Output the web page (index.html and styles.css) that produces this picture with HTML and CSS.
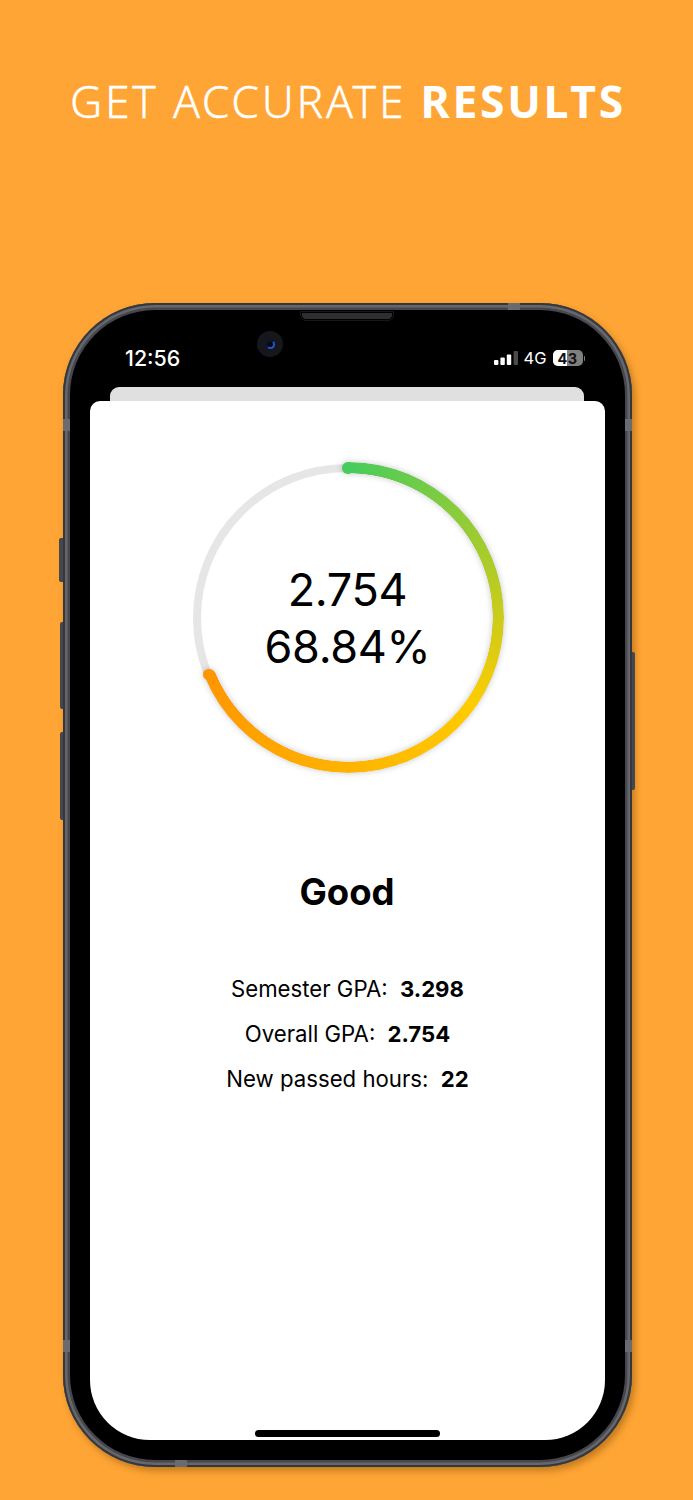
FILE: index.html
```html
<!DOCTYPE html>
<html lang="en">
<head>
    <meta charset="UTF-8">
    <meta name="viewport" content="width=device-width, initial-scale=1.0">
    <title>Get Accurate Results</title>
    <link rel="stylesheet" href="styles.css">
</head>
<body>
    <h1 class="headline">GET ACCURATE <strong>RESULTS</strong></h1>

    <div class="phone">
        <span class="side-btn mute"></span>
        <span class="side-btn vol-up"></span>
        <span class="side-btn vol-down"></span>
        <span class="side-btn power"></span>
        <span class="band band-top"></span>
        <span class="band band-bottom"></span>
        <span class="band band-left"></span>
        <span class="band band-right"></span>
        <span class="band band-left-low"></span>
        <span class="band band-right-low"></span>

        <div class="bezel">
            <span class="speaker"></span>
            <span class="camera"><span class="lens"></span></span>

            <div class="status-bar">
                <span class="time">12:56</span>
                <div class="status-icons">
                    <svg class="signal" width="24" height="14" viewBox="0 0 24 14">
                        <rect x="0" y="9" width="4.4" height="5" rx="1" fill="#fff"/>
                        <rect x="6.4" y="6.5" width="4.4" height="7.5" rx="1" fill="#fff"/>
                        <rect x="12.8" y="3.5" width="4.4" height="10.5" rx="1" fill="#fff"/>
                        <rect x="19.6" y="0" width="4.4" height="14" rx="1" fill="#4a4a4a"/>
                    </svg>
                    <span class="network">4G</span>
                    <span class="battery"><span class="battery-fill"></span><span class="battery-level">43</span></span>
                    <span class="battery-tip"></span>
                </div>
            </div>

            <div class="sheet-back"></div>
            <div class="sheet">
                <div class="gauge">
                    <div class="gauge-track"></div>
                    <div class="gauge-arc">
                        <div class="gauge-fill"></div>
                        <span class="cap cap-start"></span>
                        <span class="cap cap-end"></span>
                    </div>
                    <div class="gauge-text">
                        <div>2.754</div>
                        <div>68.84%</div>
                    </div>
                </div>

                <h2 class="grade">Good</h2>

                <div class="stats">
                    <p>Semester GPA: <b>3.298</b></p>
                    <p>Overall GPA: <b>2.754</b></p>
                    <p>New passed hours: <b>22</b></p>
                </div>

                <span class="home-bar"></span>
            </div>
        </div>
    </div>
</body>
</html>
```

FILE: styles.css
```css
html, body {
    margin: 0;
    height: 1500px;
    overflow: hidden;
}
body {
    background-color: #ffa535;
    font-family: 'Inter', 'Liberation Sans', sans-serif;
    color: #000;
}
.headline {
    margin: 0;
    padding: 71px 0 0 3px;
    height: 303px;
    box-sizing: border-box;
    text-align: center;
    color: #fff;
    font-family: 'Noto Sans', sans-serif;
    font-weight: 300;
    -webkit-text-stroke: 0.35px #fff;
    font-size: 44.5px;
    line-height: 60px;
    letter-spacing: 2.7px;
    white-space: nowrap;
}
.headline strong {
    font-weight: 700;
    -webkit-text-stroke: 0;
}

/* phone body */
.phone {
    position: relative;
    box-sizing: border-box;
    width: 569px;
    height: 1164px;
    margin-left: 63px;
    padding: 7px;
    border-radius: 92px;
    background: #46474c;
    box-shadow: 3px 4px 7px rgba(120, 70, 0, 0.45), inset 0 0 0 2px #36373c, inset 0 0 0 4.5px #66676c;
}
.band {
    position: absolute;
    background: #6a6b70;
}
.band-top { top: 0; right: 112px; width: 12px; height: 7px; }
.band-bottom { bottom: 0; left: 112px; width: 12px; height: 7px; }
.band-left { left: 0; top: 116px; width: 7px; height: 12px; }
.band-right { right: 0; top: 116px; width: 7px; height: 12px; }
.band-left-low { left: 0; bottom: 115px; width: 7px; height: 12px; }
.band-right-low { right: 0; bottom: 115px; width: 7px; height: 12px; }

.side-btn {
    position: absolute;
    background: #46474d;
    border-radius: 2px 0 0 2px;
}
.mute { left: -4px; top: 235px; width: 4px; height: 44px; }
.vol-up { left: -3px; top: 319px; width: 3px; height: 87px; }
.vol-down { left: -3px; top: 429px; width: 3px; height: 88px; }
.power { right: -3px; top: 349px; width: 3px; height: 138px; border-radius: 0 2px 2px 0; }

.bezel {
    position: relative;
    height: 100%;
    background: #000;
    border-radius: 85px;
    overflow: hidden;
}
.speaker {
    position: absolute;
    top: 2px;
    left: 231px;
    width: 92px;
    height: 8px;
    box-sizing: border-box;
    background: #2e2e31;
    border: 1px solid #000;
    outline: 1px solid #17171a;
    border-radius: 0 0 5px 5px;
}
.camera {
    position: absolute;
    top: 21px;
    left: 187px;
    width: 26px;
    height: 26px;
    border-radius: 50%;
    background: #15171d;
    display: flex;
    align-items: center;
    justify-content: center;
}
.lens {
    width: 9px;
    height: 9px;
    box-sizing: border-box;
    border-radius: 50%;
    background: #05070f;
    border: 2px solid #2452c8;
    border-top-color: #0a1330;
    border-left-color: #0a1330;
}

/* status bar */
.status-bar {
    display: flex;
    justify-content: space-between;
    align-items: center;
    height: 24px;
    padding: 36px 40px 0 55px;
    color: #fff;
}
.time {
    font-size: 21.4px;
    font-weight: 500;
}
.status-icons {
    display: flex;
    align-items: center;
}
.network {
    margin-left: 6px;
    font-size: 16.5px;
}
.battery {
    position: relative;
    width: 30px;
    height: 16px;
    margin-left: 6px;
    border-radius: 5px;
    background: #7f7f7f;
    overflow: hidden;
    display: flex;
    align-items: center;
    justify-content: center;
}
.battery-fill {
    position: absolute;
    top: 0;
    left: 0;
    bottom: 0;
    width: 14px;
    background: #fff;
}
.battery-level {
    position: relative;
    color: #111;
    font-size: 14.5px;
    font-weight: 700;
    letter-spacing: 0.5px;
}
.battery-tip {
    width: 1.5px;
    height: 5px;
    margin-left: 1px;
    background: #7f7f7f;
    border-radius: 0 1px 1px 0;
}

/* sheets */
.sheet-back {
    height: 14px;
    margin: 17px 41px 0 40px;
    background: #e0e0e0;
    border-radius: 9px 9px 0 0;
}
.sheet {
    position: relative;
    height: 1039px;
    margin: 0 20px;
    padding-top: 61px;
    box-sizing: border-box;
    background: #fff;
    border-radius: 10px 10px 60px 60px;
}

/* gauge */
.gauge {
    position: relative;
    width: 311px;
    height: 312px;
    margin: 0 auto;
    left: 0.5px;
}
.gauge-track {
    position: absolute;
    top: 1.5px;
    left: 0.5px;
    width: 308px;
    height: 308px;
    box-sizing: border-box;
    border: 8px solid #e6e6e6;
    border-radius: 50%;
}
.gauge-arc {
    position: absolute;
    top: 0;
    left: 0;
    width: 311px;
    height: 311px;
    filter: drop-shadow(0 0 3px rgba(0, 0, 0, 0.22));
}
.gauge-fill {
    position: absolute;
    inset: 0;
    border-radius: 50%;
    background: conic-gradient(#46cc5c 0deg, #ffcc00 125deg, #ff9500 247.8deg, transparent 247.8deg);
    -webkit-mask: radial-gradient(circle at center, transparent 144px, #000 144.5px);
    mask: radial-gradient(circle at center, transparent 144px, #000 144.5px);
}
.cap {
    position: absolute;
    width: 11.5px;
    height: 11.5px;
    border-radius: 50%;
}
.cap-start {
    left: 149.7px;
    top: 0;
    background: #46cc5c;
}
.cap-end {
    left: 10.5px;
    top: 206.5px;
    background: #ff9500;
}
.gauge-text {
    position: absolute;
    inset: 0 1px 1px 0;
    display: flex;
    flex-direction: column;
    align-items: center;
    justify-content: center;
    font-size: 45px;
    line-height: 57px;
    letter-spacing: -0.3px;
}

.grade {
    margin: 96px 1px 0 0;
    text-align: center;
    font-size: 36.5px;
    line-height: 44px;
    font-weight: 700;
}

.stats {
    margin-top: 53px;
    text-align: center;
    font-size: 22.2px;
}
.stats p {
    margin: 0;
    height: 44.8px;
    line-height: 44.8px;
}
.stats b {
    font-weight: 700;
    margin-left: 6px;
}

.home-bar {
    position: absolute;
    left: 165px;
    bottom: 3px;
    width: 185px;
    height: 7px;
    border-radius: 3.5px;
    background: #000;
}
```
